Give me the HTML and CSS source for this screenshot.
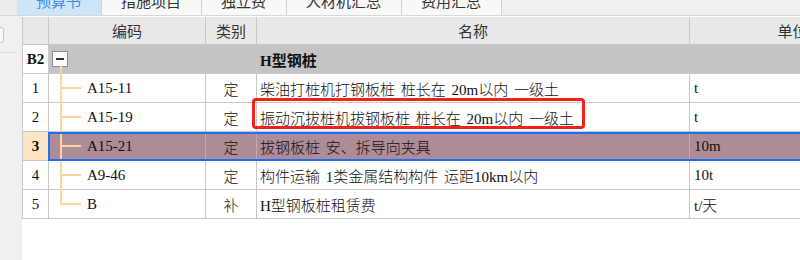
FILE: index.html
```html
<!DOCTYPE html>
<html lang="zh-CN">
<head>
<meta charset="utf-8">
<title>预算书</title>
<link rel="stylesheet" href="styles.css">
</head>
<body>
<div class="app">
  <div class="tabbar">
    <div class="tab-lead"></div>
    <div class="tab active">预算书</div>
    <div class="tab">措施项目</div>
    <div class="tab">独立费</div>
    <div class="tab">人材机汇总</div>
    <div class="tab">费用汇总</div>
  </div>
  <div class="main">
    <aside class="side">
      <div class="side-btn"></div>
      <div class="side-rule"></div>
    </aside>
    <div class="grid">
      <div class="row head">
        <div class="c num"></div>
        <div class="c code">编码</div>
        <div class="c type">类别</div>
        <div class="c name">名称</div>
        <div class="c unit">单位</div>
      </div>
      <div class="row group">
        <div class="c num">B2</div>
        <div class="c code"><span class="toggle"></span></div>
        <div class="c type"></div>
        <div class="c name">H型钢桩</div>
        <div class="c unit"></div>
      </div>
      <div class="row">
        <div class="c num">1</div>
        <div class="c code"><span class="tree"></span>A15-11</div>
        <div class="c type">定</div>
        <div class="c name">柴油打桩机打钢板桩 桩长在 20m以内 一级土</div>
        <div class="c unit">t</div>
      </div>
      <div class="row">
        <div class="c num">2</div>
        <div class="c code"><span class="tree"></span>A15-19</div>
        <div class="c type">定</div>
        <div class="c name">振动沉拔桩机拔钢板桩 桩长在 20m以内 一级土<span class="mark"></span></div>
        <div class="c unit">t</div>
      </div>
      <div class="row current">
        <div class="c num">3</div>
        <div class="sel">
          <div class="c code"><span class="tree"></span>A15-21</div>
          <div class="c type">定</div>
          <div class="c name">拔钢板桩 安、拆导向夹具</div>
          <div class="c unit">10m</div>
        </div>
      </div>
      <div class="row">
        <div class="c num">4</div>
        <div class="c code"><span class="tree"></span>A9-46</div>
        <div class="c type">定</div>
        <div class="c name">构件运输 1类金属结构构件 运距10km以内</div>
        <div class="c unit">10t</div>
      </div>
      <div class="row">
        <div class="c num">5</div>
        <div class="c code"><span class="tree last"></span>B</div>
        <div class="c type">补</div>
        <div class="c name">H型钢板桩租赁费</div>
        <div class="c unit">t/天</div>
      </div>
    </div>
  </div>
</div>
</body>
</html>
```

FILE: styles.css
```css
* { box-sizing: border-box; }

body {
  margin: 0;
  width: 800px;
  height: 260px;
  overflow: hidden;
  background: #fff;
  color: #111;
  font-family: "Liberation Serif", "Noto Sans CJK SC", serif;
  font-size: 15px;
  font-weight: 300;
}

.app {
  display: flex;
  flex-direction: column;
  height: 260px;
}

/* tab strip */
.tabbar {
  display: flex;
  flex: none;
  height: 16px;
  background: #f0f0f0;
  border-bottom: 1px solid #d8d8d8;
  overflow: hidden;
  font-family: "Noto Sans CJK SC", sans-serif;
  font-weight: 400;
  color: #333;
}
.tab-lead { width: 17px; flex: none; background: #ececec; }
.tab {
  flex: none;
  height: 15px;
  line-height: 2px;
  padding: 0 20px 0 19px;
  background: #f8f8f8;
  border-right: 1px solid #d2d2d2;
}
.tab.active { background: #cde5f8; color: #3a8ee6; }

/* body */
.main {
  display: flex;
  flex: 1;
  min-height: 0;
}
.side {
  width: 22px;
  flex: none;
  background: #f0f0f0;
  padding-top: 11px;
  overflow: hidden;
}
.side-btn {
  width: 16px;
  height: 16px;
  margin-left: -12px;
  border: 1px solid #c6c6c6;
  border-radius: 3px;
  background: #f8f8f8;
}
.side-rule {
  margin-top: 9px;
  width: 16px;
  height: 1px;
  background: #dcdcdc;
}

.grid {
  flex: 1;
  min-width: 0;
  overflow: hidden;
  padding-top: 1px;
  background: #fff;
}
.row {
  display: flex;
  height: 29px;
}
.row.head { height: 28px; }

.c {
  flex: none;
  height: 100%;
  display: flex;
  align-items: center;
  white-space: nowrap;
  padding: 0 3px;
  border-right: 1px solid #c8c8c8;
  border-bottom: 1px solid #c8c8c8;
  word-spacing: 2px;
}
.num {
  width: 27px;
  justify-content: center;
  border-left: 1px solid #c8c8c8;
  padding: 0;
  font-weight: 400;
}
.code { width: 157px; padding: 0; position: relative; font-weight: 400; }
.type { width: 51px; justify-content: center; padding: 0; }
.name { width: 433px; position: relative; }
.unit { width: 206px; padding-left: 4px; }

.head .c {
  background: #e8e8e8;
  justify-content: center;
  padding: 0;
  color: #333;
  font-family: "Noto Sans CJK SC", sans-serif;
  font-weight: 400;
}

.group .c { background: #c4c4c4; }
.group .num { background: #fff; font-weight: bold; }
.group .name { font-weight: bold; }

.current .num { background: #fde5c6; font-weight: bold; }
.sel {
  display: flex;
  flex: none;
  position: relative;
  background: #ad8b97;
}
.sel .c { border-color: #c2a9b2; }
.sel::after {
  content: "";
  position: absolute;
  left: -1px;
  top: 0;
  right: 0;
  bottom: 0;
  border: 2px solid #1f6ff2;
}

/* tree */
.toggle {
  position: relative;
  flex: none;
  width: 16px;
  height: 16px;
  margin-left: 3px;
  border: 1px solid #8e8e8e;
  background: #fafafa;
}
.toggle::before {
  content: "";
  position: absolute;
  left: 3px;
  top: 6px;
  width: 8px;
  height: 2px;
  background: #333;
}
.toggle::after {
  content: "";
  position: absolute;
  left: 7px;
  top: 100%;
  width: 2px;
  height: 9px;
  background: #fdd4a0;
}
.tree {
  position: relative;
  flex: none;
  align-self: stretch;
  width: 38px;
}
.tree::before {
  content: "";
  position: absolute;
  left: 11px;
  top: 0;
  bottom: -1px;
  width: 2px;
  background: #fdd4a0;
}
.tree.last::before { bottom: 50%; }
.tree::after {
  content: "";
  position: absolute;
  left: 11px;
  top: 50%;
  width: 21px;
  height: 2px;
  margin-top: -1px;
  background: #fdd4a0;
}

/* annotation */
.mark {
  position: absolute;
  left: -5px;
  top: -5px;
  width: 333px;
  height: 31px;
  border: 3px solid #f2221b;
  border-radius: 4px;
}
```
